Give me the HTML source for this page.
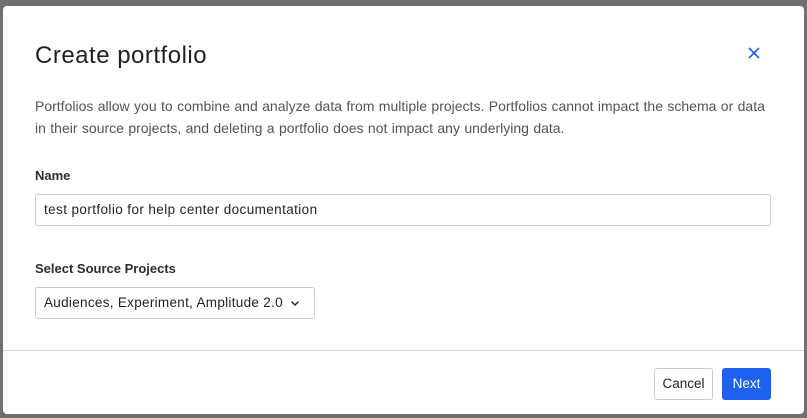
<!DOCTYPE html>
<html><head><style>
html,body{margin:0;padding:0;width:807px;height:418px;overflow:hidden;background:#707070;font-family:"Liberation Sans",sans-serif;}
.m{position:absolute;left:3px;top:6px;width:801px;height:408px;background:#fff;border-radius:4px;}
.t{position:absolute;left:32px;top:36px;font-size:24px;color:#1e2226;letter-spacing:0.5px;}
.x{position:absolute;left:744px;top:40px;}
.d{position:absolute;left:32px;top:89px;width:790px;font-size:14px;line-height:22px;color:#4f555c;letter-spacing:0px;word-spacing:0.5px;white-space:nowrap;}
.l{position:absolute;left:32px;font-size:13px;font-weight:bold;color:#2a2f35;}
.in{position:absolute;left:32px;top:188px;height:30px;border:1px solid #c8ccd1;border-radius:3px;font-size:13.5px;letter-spacing:0.4px;color:#1e2226;line-height:30px;padding-left:8px;width:726px;}
.sel{position:absolute;left:32px;top:281px;width:270px;height:30px;border:1px solid #c8ccd1;border-radius:3px;font-size:13.5px;letter-spacing:0.3px;color:#1e2226;line-height:30px;padding-left:8px;}
.hr{position:absolute;left:0;top:344px;width:801px;height:1px;background:#d4d6d9;}
.b{position:absolute;top:362px;height:30px;border-radius:3px;font-size:13.5px;line-height:30px;text-align:center;}
.c{left:651px;width:57px;border:1px solid #c8ccd1;color:#1e2226;}
.n{left:719px;width:49px;background:#1e61f0;color:#fff;top:362px;height:32px;line-height:32px;}
</style></head><body>
<div class="m">
<div class="t">Create portfolio</div>
<svg class="x" width="14" height="14" viewBox="0 0 14 14"><path d="M2 2L12 12M12 2L2 12" stroke="#1e61f0" stroke-width="1.6"/></svg>
<div class="d">Portfolios allow you to combine and analyze data from multiple projects. Portfolios cannot impact the schema or data<br>in their source projects, and deleting a portfolio does not impact any underlying data.</div>
<div class="l" style="top:162px">Name</div>
<div class="in">test portfolio for help center documentation</div>
<div class="l" style="top:255px">Select Source Projects</div>
<div class="sel">Audiences, Experiment, Amplitude 2.0 <svg width="10" height="8" viewBox="0 0 10 8" style="margin-left:3px"><path d="M1.5 2.5L5 6L8.5 2.5" stroke="#1e2226" stroke-width="1.4" fill="none"/></svg></div>
<div class="hr"></div>
<div class="b c">Cancel</div>
<div class="b n">Next</div>
</div>
</body></html>
